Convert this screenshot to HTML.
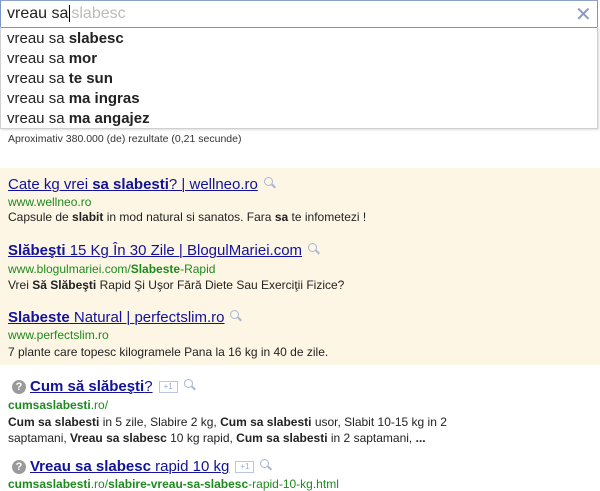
<!DOCTYPE html>
<html><head><meta charset="utf-8"><style>
body{margin:0;width:600px;height:485px;overflow:hidden;background:#fff;font-family:"Liberation Sans",Arial,sans-serif;position:relative}
.a{position:absolute;white-space:nowrap}
#sb{left:0;top:0;width:596px;height:26px;border:1px solid #7a96c4;border-top-color:#8ea3cc}
#dd{left:0;top:27px;width:596px;height:101px;border:1px solid #cfcfcf;border-top:none;box-shadow:1px 1px 2px #ddd}
.s{left:7px;font-size:15px;color:#222}
.t{font-size:15px;color:#12129a;text-decoration:underline;text-decoration-thickness:1px}
.u{font-size:12px;color:#1e8a1e}
.d{font-size:12px;color:#222}
.mg{display:inline-block;width:7px;height:7px;border:1.5px solid #a9b7d4;border-radius:50%;position:relative;margin-left:6px;vertical-align:3px}
.mg:after{content:"";position:absolute;left:6px;top:7px;width:5px;height:2px;background:#a9b7d4;transform:rotate(45deg)}
.p1{display:inline-block;border:1px solid #b9c6e0;font-size:8px;color:#9aaad0;padding:0 4px;margin-left:6px;vertical-align:2px;line-height:10px}
.q{display:inline-block;width:14px;height:14px;border-radius:50%;background:#9a9a9a;color:#fff;font-size:11px;font-weight:bold;text-align:center;line-height:14px;margin-right:4px;vertical-align:1px}
</style></head><body>
<div class="a" id="sb"></div>
<div class="a" style="left:7px;top:5px;font-size:16px;color:#222">vreau sa<span style="border-left:1px solid #000;margin-left:1px"></span><span style="color:#bbb;margin-left:1px">slabesc</span></div>
<div class="a" style="left:575px;top:2px;font-size:20px;color:#8a9ac0">✕</div>
<div class="a" id="dd"></div>
<div class="a s" style="top:30px">vreau sa <b>slabesc</b></div>
<div class="a s" style="top:50px">vreau sa <b>mor</b></div>
<div class="a s" style="top:70px">vreau sa <b>te sun</b></div>
<div class="a s" style="top:90px">vreau sa <b>ma ingras</b></div>
<div class="a s" style="top:110px">vreau sa <b>ma angajez</b></div>
<div class="a" style="left:8px;top:133px;font-size:10.5px;color:#333">Aproximativ 380.000 (de) rezultate (0,21 secunde)</div>
<div class="a" style="left:0;top:168px;width:600px;height:197px;background:#fdf6e5"></div>
<div class="a" style="left:8px;top:176px"><span class="t">Cate kg vrei <b>sa slabesti</b>? | wellneo.ro</span><span class="mg"></span></div>
<div class="a u" style="left:8px;top:195px">www.wellneo.ro</div>
<div class="a d" style="left:8px;top:210px">Capsule de <b>slabit</b> in mod natural si sanatos. Fara <b>sa</b> te infometezi !</div>
<div class="a" style="left:8px;top:242px"><span class="t"><b>Slăbeşti</b> 15 Kg În 30 Zile | BlogulMariei.com</span><span class="mg"></span></div>
<div class="a u" style="left:8px;top:262px">www.blogulmariei.com/<b>Slabeste</b>-Rapid</div>
<div class="a d" style="left:8px;top:278px">Vrei <b>Să Slăbeşti</b> Rapid Şi Uşor Fără Diete Sau Exerciţii Fizice?</div>
<div class="a" style="left:8px;top:309px"><span class="t"><b>Slabeste</b> Natural | perfectslim.ro</span><span class="mg"></span></div>
<div class="a u" style="left:8px;top:328px">www.perfectslim.ro</div>
<div class="a d" style="left:8px;top:345px">7 plante care topesc kilogramele Pana la 16 kg in 40 de zile.</div>
<div class="a" style="left:12px;top:378px"><span class="q">?</span><span class="t"><b>Cum să slăbeşti</b>?</span><span class="p1">+1</span><span class="mg"></span></div>
<div class="a u" style="left:8px;top:398px"><b>cumsaslabesti</b>.ro/</div>
<div class="a d" style="left:8px;top:415px"><b>Cum sa slabesti</b> in 5 zile, Slabire 2 kg, <b>Cum sa slabesti</b> usor, Slabit 10-15 kg in 2</div>
<div class="a d" style="left:8px;top:431px">saptamani, <b>Vreau sa slabesc</b> 10 kg rapid, <b>Cum sa slabesti</b> in 2 saptamani, <b>...</b></div>
<div class="a" style="left:12px;top:458px"><span class="q">?</span><span class="t"><b>Vreau sa slabesc</b> rapid 10 kg</span><span class="p1">+1</span><span class="mg"></span></div>
<div class="a u" style="left:8px;top:477px"><b>cumsaslabesti</b>.ro/<b>slabire-vreau-sa-slabesc</b>-rapid-10-kg.html</div>
</body></html>
